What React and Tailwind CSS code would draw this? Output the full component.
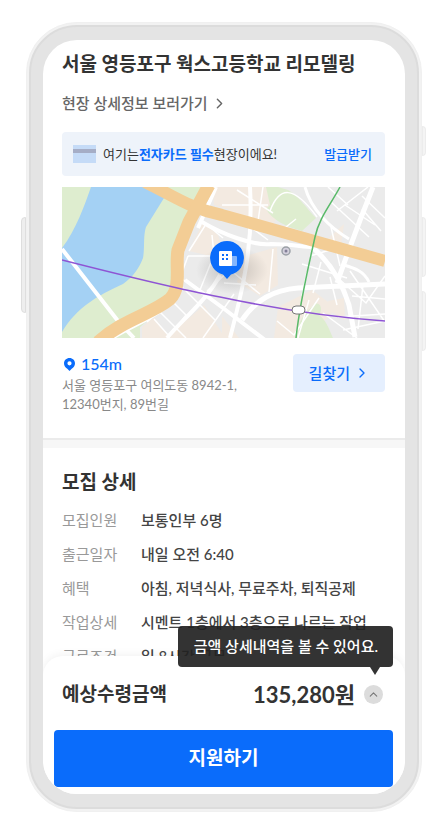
import { ChevronRight, ChevronUp } from "lucide-react";

const details = [
  { label: "모집인원", value: "보통인부 6명" },
  { label: "출근일자", value: "내일 오전 6:40" },
  { label: "혜택", value: "아침, 저녁식사, 무료주차, 퇴직공제" },
  { label: "작업상세", value: "시멘트 1층에서 3층으로 나르는 작업" },
  { label: "근로조건", value: "일 8시간 근무" },
];

export default function App() {
  return (
    <main className="bg-white px-[26px] py-[22px] font-[Lato,'Noto_Sans_CJK_KR',sans-serif] text-[#333]">
      <div className="relative rounded-[51px] border border-[#f0f0f0] bg-[#f2f2f2] p-[2px]">
        <SideButtons />
        <div className="rounded-[48px] border-2 border-[#dcdcdc] bg-[#e4e4e4] px-3 py-[13px]">
          <div className="relative flex flex-col overflow-hidden rounded-[34px] bg-white">
            <Site />
            <div className="h-[10px] border-t-2 border-[#ebebeb] bg-[#f7f7f7]" />
            <Details />
            <PayBar />
          </div>
        </div>
      </div>
    </main>
  );
}

function SideButtons() {
  return (
    <>
      <span className="absolute -left-[6px] top-[194px] h-24 w-[5px] rounded-l-sm border border-[#dedede] bg-[#eee]" />
      <span className="absolute -right-[5px] top-[103px] h-[30px] w-1 rounded-r-sm border border-[#ececec] bg-[#f4f4f4]" />
      <span className="absolute -right-[5px] top-[194px] h-[60px] w-1 rounded-r-sm border border-[#ececec] bg-[#f4f4f4]" />
      <span className="absolute -right-[5px] top-[268px] h-[60px] w-1 rounded-r-sm border border-[#ececec] bg-[#f4f4f4]" />
    </>
  );
}

function Site() {
  return (
    <section className="pr-5 pl-[19px] pt-2 pb-6">
      <h1 className="text-[19px] leading-8 font-bold">서울 영등포구 웍스고등학교 리모델링</h1>
      <a href="#detail" className="mt-[11px] flex items-center gap-[3px] text-[15px] leading-6 font-medium text-[#666]">
        현장 상세정보 보러가기 <ChevronRight size={17} />
      </a>
      <div className="mt-[17px] flex h-11 items-center rounded-sm bg-[#eef3fa] pr-[13px] pl-[11px] text-[13px] leading-5">
        <CardIcon />
        <p className="ml-[7px] flex-1">
          여기는<strong className="font-bold text-[#0a6cfb]">전자카드 필수</strong>현장이에요!
        </p>
        <a href="#card" className="font-medium text-[#0a6cfb]">발급받기</a>
      </div>
      <MapView />
      <div className="mt-4 flex items-start justify-between">
        <div>
          <p className="flex items-center gap-1 text-base leading-5 font-medium text-[#0a6cfb]">
            <svg width="15" height="15" viewBox="0 0 15 15" fill="currentColor" aria-hidden="true">
              <path fillRule="evenodd" d="M7.5 1C4.4 1 2 3.3 2 6.3c0 2.4 1.4 4.2 3.3 5.5L7.5 14l2.2-2.2C11.6 10.500 13 8.700 13 6.300 13 3.300 10.600 1 7.500 1Zm0 3.200a2.100 2.100 0 1 1 0 4.200 2.100 2.100 0 0 1 0-4.200Z" />
            </svg>
            154m
          </p>
          <p className="mt-[2px] text-[13px] leading-[19px] text-[#888]">
            서울 영등포구 여의도동 8942-1,
            <br />
            12340번지, 89번길
          </p>
        </div>
        <button className="flex h-[38px] items-center gap-1 rounded-sm bg-[#e5effe] pr-[15px] pl-4 text-[15px] font-medium text-[#0a6cfb]">
          길찾기 <ChevronRight size={16} />
        </button>
      </div>
    </section>
  );
}

function CardIcon() {
  return (
    <svg width="23" height="18" viewBox="0 0 23 18" aria-hidden="true">
      <rect width="23" height="18" fill="#c5dbf7" />
      <rect y="4" width="23" height="4" fill="#a5adc6" />
    </svg>
  );
}

function MapView() {
  return (
    <svg viewBox="0 0 323 151" className="mt-[11px] block w-full" role="img" aria-label="현장 위치">
      <rect width="323" height="151" fill="#ebebeb" />
      <g fill="#f3eae1">
        <path d="M141 35 156 48 163 70 144 68 127 64ZM150 0h22v24l-20-6Z" />
        <path d="M80 140 92 130 108 151H80ZM126 132 142 118 163 151H103Z" />
        <path d="M180 70 215 60 216 98 198 109 175 95ZM172 0h34l12 24-8 16-44-16Z" />
        <path d="M216 120 250 103 274 121 247 151H212ZM160 129 177 151h-17ZM266 114l16-3 1 22-14-8ZM262 55l20-18-3 22Z" />
      </g>
      <path d="M0 0h139L110 73 108 115 78 140V151H0Z" fill="#deedcf" />
      <path d="M29 0h54l19 11-18 29c-3 9-1 20-3 31-4 10-9 18-20 26C35 109 15 120 0 145V61C14 43 23 17 29 0Z" fill="#a4d1f4" />
      <path d="M204 0h12l10 3c12 7 18 18 28 28l-14 13c-15-4-30-11-36-22l4-4Z" fill="#deedcf" />
      <path d="M238 135c4-9 10-12 14-18 7-3 9 6 5 11 7 5 10 14 14 23h-35Z" fill="#deedcf" />
      <g fill="none" stroke="#fff" strokeWidth="4">
        <path d="m0 62 56 72 16 17M154 0l-18 41M123 93l38 28 42 32M105 151c16-19 40-38 53-63" />
        <path d="M188 0c2 36-1 66-6 91-3 17-8 37-14 60M140 35c20 12 51 24 69 22 20 0 32 3 41 3" />
        <path d="M250 60c18 15 29 33 37 58l6 32M311 0c-14 35-24 62-36 96M180 133c14-20 31-30 56-32l87-4" strokeWidth="5" />
        <path d="M50 151c28-17 57-25 65-48" />
        <path d="M243 0c6 22 24 40 44 52M282 78c10 3 20 6 25 17" strokeWidth="3" />
      </g>
      <g fill="none" stroke="#fff" strokeWidth="1.500">
        <path d="M126 69h28M127 64l17-27 17 14M150 48l2 20-14 35-20-12 8-22" />
        <path d="M92 132l15 17M97 124l27 27M109 113l15 15-13 17M119 99l34 34M85 135l32-28" />
        <path d="M145 104l23-21 30 24M211 62l-4 43M162 96l32 2M141 151l31-44M215 134l17 14 25-37" />
        <path d="M160 18h46M175 3l36 23M208 24C217 0 231-3 255 30M174 29l32 24M219 44l15-12M201 0l-6 41" />
        <path d="M266 0l20 18M275 24l31-24M283 18l30 20M269 15l38 35M300 9l23 22M300 22l19 22" />
        <path d="M269 40l9 39M248 69l33-10M240 77l45 14M245 85l-5 24M259 75l-8 31M268 90l7 28" />
        <path d="M277 92l27 24 19-27M288 84l35 51M290 109l33 3M301 98l-5 44M276 130l47-3M281 143l42-9M247 113l-11 38M261 126l34 25" />
      </g>
      <g fill="none" stroke="#f3cd95">
        <path d="M83-5c27 13 46 27 77 33l163 46" strokeWidth="12" />
        <path d="M147-2 127 35 116 63c-3 16 4 37-8 49-18 15-46 20-72 43" strokeWidth="13" />
      </g>
      <path d="M0 73c55 14 111 28 158 37 57 12 107 20 165 24" fill="none" stroke="#8e54d4" strokeWidth="1.5" />
      <path d="M278 0c-9 17-21 31-25 50-7 32-15 64-19 101" fill="none" stroke="#59ba69" strokeWidth="1.5" />
      <rect x="230" y="119" width="13" height="8" rx="4" fill="#fff" stroke="#777" />
      <circle cx="224" cy="64" r="4" fill="#d3d0dc" stroke="#9ba0a7" strokeWidth="1.500" />
      <circle cx="224" cy="64" r="1.500" fill="#837f98" />
      <ellipse cx="170" cy="83" rx="36" ry="24" fill="url(#pinShadow)" />
      <path d="M165 54a17 17 0 0 1 4 33.500L165 92l-4-4.500A17 17 0 0 1 165 54Z" fill="#0a6cfb" />
      <rect x="169" y="69" width="6" height="10" rx="1" fill="#82b5fd" />
      <rect x="157" y="64" width="13" height="15" rx="1" fill="#fff" />
      <path d="M160 67h2v2h-2zM164 67h2v2h-2zM160 71h2v2h-2zM164 71h2v2h-2z" fill="#0a6cfb" />
      <defs>
        <radialGradient id="pinShadow">
          <stop stopColor="#333" stopOpacity=".25" />
          <stop offset="1" stopColor="#333" stopOpacity="0" />
        </radialGradient>
      </defs>
    </svg>
  );
}

function Details() {
  return (
    <section id="detail" className="h-[208px] overflow-hidden pr-5 pl-[19px] pt-5">
      <h2 className="text-[19px] leading-7 font-bold">모집 상세</h2>
      <dl className="mt-[7px] text-[15px] leading-[34px]">
        {details.map((d) => (
          <div key={d.label} className="flex">
            <dt className="w-[79px] shrink-0 text-[#999]">{d.label}</dt>
            <dd className="font-medium whitespace-nowrap text-[#444]">{d.value}</dd>
          </div>
        ))}
      </dl>
    </section>
  );
}

function PayBar() {
  return (
    <footer className="relative rounded-t-[20px] bg-white pr-3 pl-[11px] pt-4 pb-[7px] shadow-[0_-2px_8px_rgba(0,0,0,0.05)]">
      <div className="absolute -top-[30px] right-3 rounded-sm bg-[#222]/92 pr-[15px] pl-4 text-[15px] leading-[41px] font-medium whitespace-nowrap text-white">
        금액 상세내역을 볼 수 있어요.
        <svg width="10" height="8" viewBox="0 0 10 8" className="absolute top-full right-[13px]" aria-hidden="true">
          <path d="M0 0h10L5 8Z" fill="#333" />
        </svg>
      </div>
      <div className="flex h-11 items-center pr-[10px] pl-2">
        <h2 className="flex-1 text-[19px] font-bold">예상수령금액</h2>
        <p className="text-[22px] font-bold">135,280원</p>
        <button aria-label="금액 상세내역" className="ml-[9px] flex size-[19px] items-center justify-center rounded-full bg-[#dcdcdc] text-[#777]">
          <ChevronUp size={13} />
        </button>
      </div>
      <button className="mt-[14px] h-[57px] w-full rounded-sm bg-[#0a6cfb] text-[19px] font-bold text-white">지원하기</button>
    </footer>
  );
}
